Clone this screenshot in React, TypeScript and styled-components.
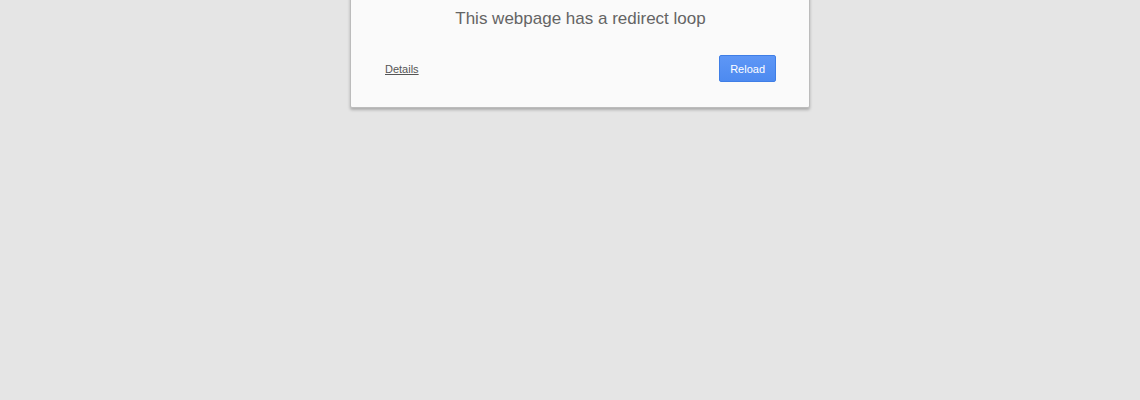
import styled, { createGlobalStyle } from "styled-components";

const GlobalStyle = createGlobalStyle`
  html, body {
    margin: 0;
    background: #e5e5e5;
    font-family: "Liberation Sans", Arial, sans-serif;
  }
`;

const Page = styled.div`
  min-height: 400px;
  padding-left: 20px;
  display: flex;
  flex-direction: column;
  align-items: center;
`;

const Card = styled.div`
  box-sizing: border-box;
  width: 460px;
  margin-top: -21px;
  padding: 28px 33px 25px 34px;
  background: #fafafa;
  border: 1px solid #bcbcbc;
  border-radius: 2px;
  box-shadow: 0 2px 3px rgba(0, 0, 0, 0.25);
`;

const Title = styled.h1`
  margin: 0;
  font-size: 17px;
  line-height: 22px;
  font-weight: normal;
  color: #646464;
  text-align: center;
`;

const Actions = styled.div`
  margin-top: 25px;
  display: flex;
  align-items: center;
  justify-content: space-between;
`;

const DetailsLink = styled.a`
  font-size: 11px;
  color: #555;
  text-decoration: underline;
  cursor: pointer;
`;

const ReloadButton = styled.button`
  box-sizing: border-box;
  height: 27px;
  padding: 0 10px;
  font-family: inherit;
  font-size: 11px;
  color: #fff;
  background: linear-gradient(#5e97f6, #4d8af0);
  border: 1px solid #3f7ee6;
  border-radius: 2px;
  cursor: pointer;
`;

const App = () => {
  return (
    <Page>
      <GlobalStyle />
      <Card>
        <Title>This webpage has a redirect loop</Title>
        <Actions>
          <DetailsLink>Details</DetailsLink>
          <ReloadButton>Reload</ReloadButton>
        </Actions>
      </Card>
    </Page>
  );
};

export default App;
